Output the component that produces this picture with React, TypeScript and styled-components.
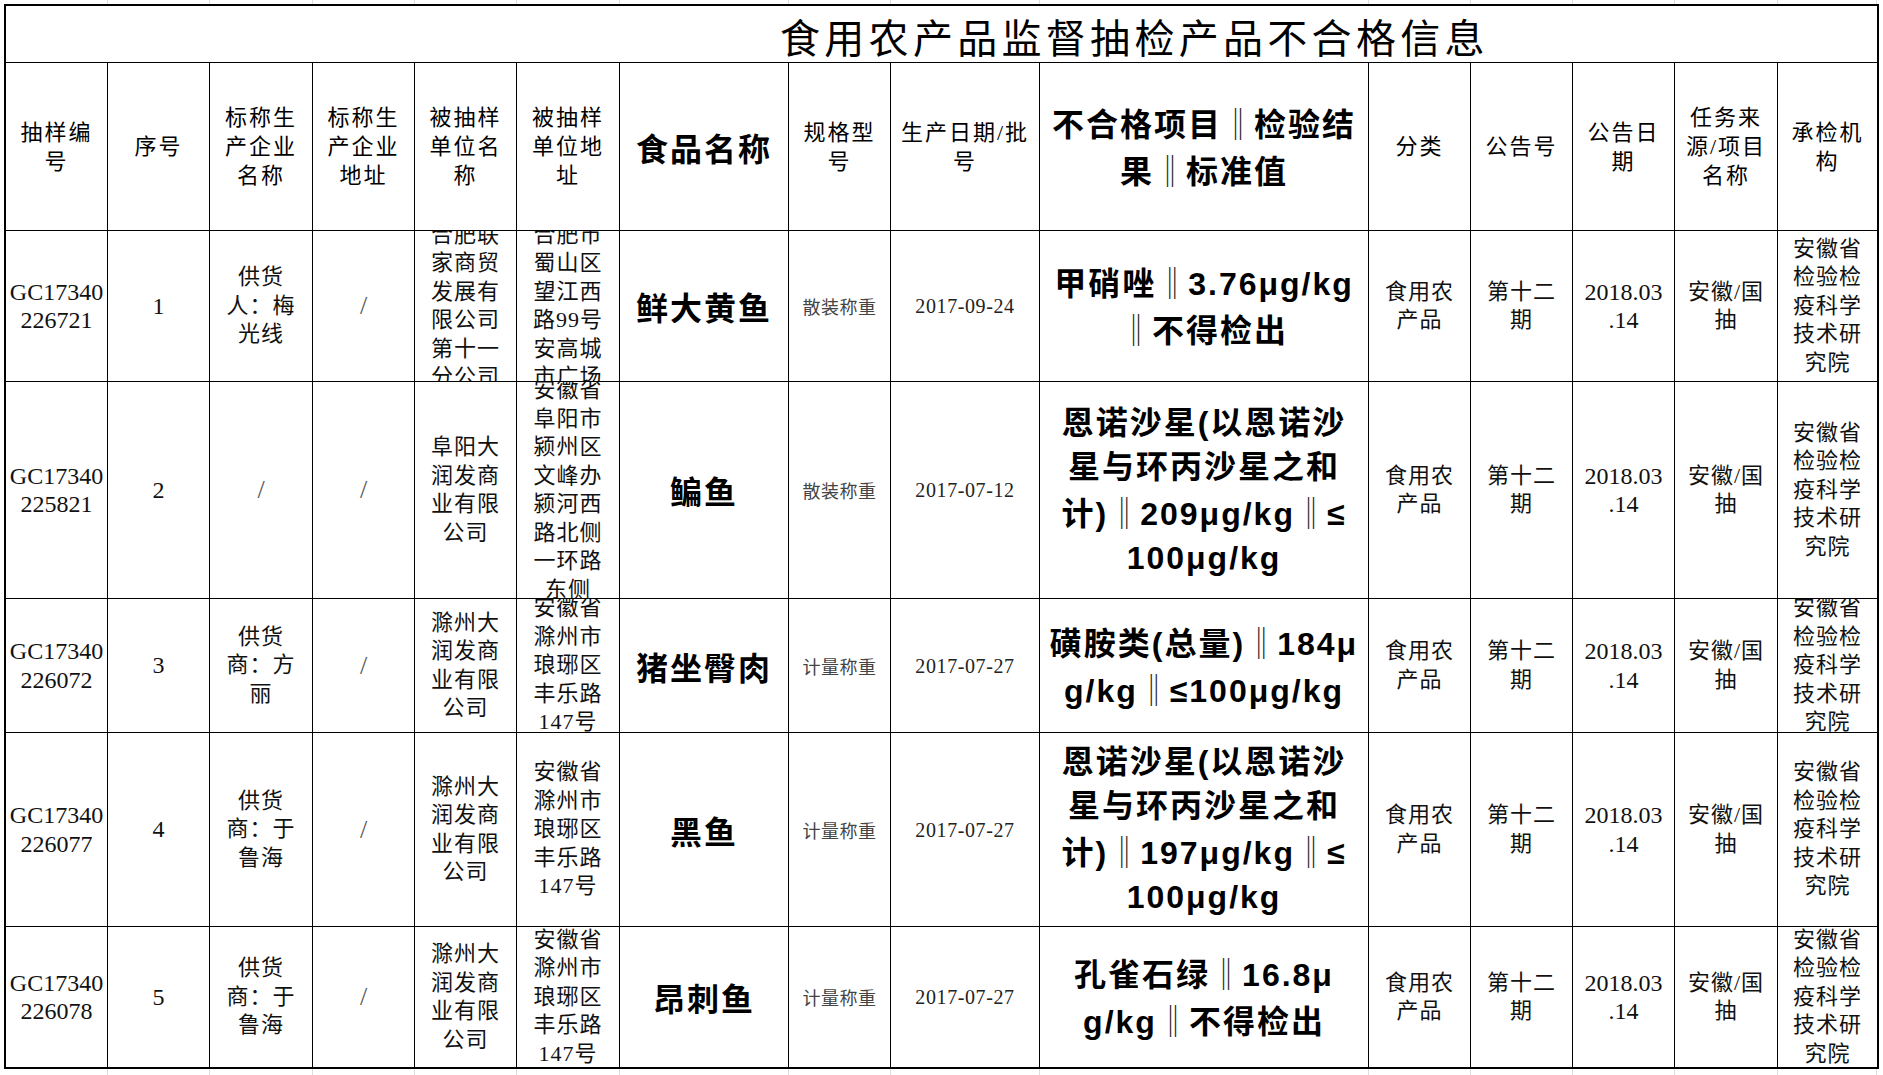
import React from "react";
import styled, { createGlobalStyle, css } from "styled-components";

const GlobalStyle = createGlobalStyle`
  html, body {
    margin: 0;
    padding: 0;
    background: #fff;
  }
  body {
    font-family: "Noto Sans CJK SC", "Noto Sans", sans-serif;
    color: #000;
  }
`;

// column widths (px) including each cell's 1px right line
const COLS = [102, 102, 103, 102, 102, 103, 169, 102, 149, 329, 102, 102, 102, 103, 99];
const gridCols = COLS.map((w) => `${w}px`).join(" ");
const ROW_HEIGHTS = [151, 217, 134, 194, 140];

type Kind = "head" | "text" | "num" | "spec" | "date" | "big" | "item" | "slash";

interface CellData {
  kind: Kind;
  lines: string[];
}

const Page = styled.div`
  width: 1883px;
  height: 1075px;
  overflow: hidden;
  display: flex;
  flex-direction: column;
`;

const GhostStrip = styled.div<{ $h: number }>`
  display: grid;
  grid-template-columns: ${gridCols};
  height: ${({ $h }) => $h}px;
  margin-left: 6px;
  flex-shrink: 0;
`;

const GhostCell = styled.div`
  border-right: 1px solid #dedede;
`;

const Sheet = styled.div`
  margin-left: 4px;
  width: 1871px;
  border: 2px solid #000;
  display: grid;
  grid-template-columns: ${gridCols};
  flex-shrink: 0;
`;

const TitleCell = styled.div`
  grid-column: 1 / -1;
  height: 57px;
  box-sizing: border-box;
  border-bottom: 1px solid #000;
  display: flex;
  align-items: center;
  padding: 4px 0 0 774px;
  font-family: "Noto Sans CJK SC", sans-serif;
  font-size: 40px;
  font-weight: 400;
  letter-spacing: 4.3px;
  white-space: nowrap;
`;

const Cell = styled.div<{ $h: number; $lastCol: boolean; $lastRow: boolean }>`
  height: ${({ $h }) => $h}px;
  box-sizing: border-box;
  border-right: ${({ $lastCol }) => ($lastCol ? "none" : "1px solid #000")};
  border-bottom: ${({ $lastRow }) => ($lastRow ? "none" : "1px solid #000")};
  display: flex;
  flex-direction: column;
  justify-content: center;
  align-items: center;
  overflow: hidden;
  text-align: center;
`;

const kindStyles: Record<Kind, ReturnType<typeof css>> = {
  head: css`
    font-family: "Liberation Serif", "Noto Sans CJK SC", serif;
    font-size: 22px;
    letter-spacing: 2px;
    line-height: 29px;
  `,
  text: css`
    font-family: "Liberation Serif", "Noto Sans CJK SC", serif;
    font-size: 22px;
    letter-spacing: 1px;
    line-height: 28.5px;
    color: #111;
  `,
  num: css`
    font-family: "Liberation Serif", serif;
    font-size: 24px;
    line-height: 28.5px;
    color: #111;
  `,
  spec: css`
    font-family: "Noto Sans CJK SC", sans-serif;
    font-size: 18px;
    letter-spacing: 0.5px;
    line-height: 24px;
    color: #444;
  `,
  date: css`
    font-family: "Liberation Serif", serif;
    font-size: 20px;
    letter-spacing: 0.6px;
    line-height: 24px;
    color: #222;
  `,
  big: css`
    font-family: "Noto Sans CJK SC", sans-serif;
    font-weight: 700;
    font-size: 32px;
    letter-spacing: 2px;
    line-height: 40px;
  `,
  item: css`
    font-family: "Liberation Sans", "Noto Sans CJK SC", sans-serif;
    font-weight: 700;
    font-size: 32px;
    letter-spacing: 2px;
    line-height: 44px;
  `,
  slash: css`
    font-family: "Liberation Serif", serif;
    font-size: 26px;
    line-height: 30px;
    color: #555;
  `,
};

const Line = styled.div<{ $kind: Kind }>`
  white-space: nowrap;
  ${({ $kind }) => kindStyles[$kind]}
`;

// the separator is a full-width, light double bar in the sheet
const Bar = styled.span`
  display: inline-block;
  width: 32px;
  text-align: center;
  font-family: "Noto Sans CJK SC", sans-serif;
  font-weight: 400;
  color: #222;
`;

const header: CellData[] = [
  { kind: "head", lines: ["抽样编", "号"] },
  { kind: "head", lines: ["序号"] },
  { kind: "head", lines: ["标称生", "产企业", "名称"] },
  { kind: "head", lines: ["标称生", "产企业", "地址"] },
  { kind: "head", lines: ["被抽样", "单位名", "称"] },
  { kind: "head", lines: ["被抽样", "单位地", "址"] },
  { kind: "big", lines: ["食品名称"] },
  { kind: "head", lines: ["规格型", "号"] },
  { kind: "head", lines: ["生产日期/批", "号"] },
  { kind: "item", lines: ["不合格项目‖检验结", "果‖标准值"] },
  { kind: "head", lines: ["分类"] },
  { kind: "head", lines: ["公告号"] },
  { kind: "head", lines: ["公告日", "期"] },
  { kind: "head", lines: ["任务来", "源/项目", "名称"] },
  { kind: "head", lines: ["承检机", "构"] },
];

const tail: CellData[] = [
  { kind: "text", lines: ["食用农", "产品"] },
  { kind: "text", lines: ["第十二", "期"] },
  { kind: "num", lines: ["2018.03", ".14"] },
  { kind: "text", lines: ["安徽/国", "抽"] },
  { kind: "text", lines: ["安徽省", "检验检", "疫科学", "技术研", "究院"] },
];

const slash: CellData = { kind: "slash", lines: ["/"] };

function row(
  code: string[],
  no: string,
  maker: string[] | null,
  unit: string[],
  address: string[],
  food: string,
  spec: string,
  date: string,
  item: string[]
): CellData[] {
  return [
    { kind: "num", lines: code },
    { kind: "num", lines: [no] },
    maker ? { kind: "text", lines: maker } : slash,
    slash,
    { kind: "text", lines: unit },
    { kind: "text", lines: address },
    { kind: "big", lines: [food] },
    { kind: "spec", lines: [spec] },
    { kind: "date", lines: [date] },
    { kind: "item", lines: item },
    ...tail,
  ];
}

const zhuzhouUnit = ["滁州大", "润发商", "业有限", "公司"];
const zhuzhouAddr = ["安徽省", "滁州市", "琅琊区", "丰乐路", "147号"];

const rows: CellData[][] = [
  row(
    ["GC17340", "226721"],
    "1",
    ["供货", "人：梅", "光线"],
    ["合肥联", "家商贸", "发展有", "限公司", "第十一", "分公司"],
    ["合肥市", "蜀山区", "望江西", "路99号", "安高城", "市广场"],
    "鲜大黄鱼",
    "散装称重",
    "2017-09-24",
    ["甲硝唑‖3.76μg/kg", "‖不得检出"]
  ),
  row(
    ["GC17340", "225821"],
    "2",
    null,
    ["阜阳大", "润发商", "业有限", "公司"],
    ["安徽省", "阜阳市", "颍州区", "文峰办", "颍河西", "路北侧", "一环路", "东侧"],
    "鳊鱼",
    "散装称重",
    "2017-07-12",
    ["恩诺沙星(以恩诺沙", "星与环丙沙星之和", "计)‖209μg/kg‖≤", "100μg/kg"]
  ),
  row(
    ["GC17340", "226072"],
    "3",
    ["供货", "商：方", "丽"],
    zhuzhouUnit,
    zhuzhouAddr,
    "猪坐臀肉",
    "计量称重",
    "2017-07-27",
    ["磺胺类(总量)‖184μ", "g/kg‖≤100μg/kg"]
  ),
  row(
    ["GC17340", "226077"],
    "4",
    ["供货", "商：于", "鲁海"],
    zhuzhouUnit,
    zhuzhouAddr,
    "黑鱼",
    "计量称重",
    "2017-07-27",
    ["恩诺沙星(以恩诺沙", "星与环丙沙星之和", "计)‖197μg/kg‖≤", "100μg/kg"]
  ),
  row(
    ["GC17340", "226078"],
    "5",
    ["供货", "商：于", "鲁海"],
    zhuzhouUnit,
    zhuzhouAddr,
    "昂刺鱼",
    "计量称重",
    "2017-07-27",
    ["孔雀石绿‖16.8μ", "g/kg‖不得检出"]
  ),
];

function withBars(text: string) {
  const parts = text.split("‖");
  return parts.flatMap((part, i) =>
    i === 0 ? [part] : [<Bar key={i}>‖</Bar>, part]
  );
}

function renderRow(cells: CellData[], height: number, lastRow: boolean, key: string) {
  return cells.map((cell, i) => (
    <Cell key={`${key}-${i}`} $h={height} $lastCol={i === COLS.length - 1} $lastRow={lastRow}>
      {cell.lines.map((line, j) => (
        <Line key={j} $kind={cell.kind}>
          {cell.kind === "item" ? withBars(line) : line}
        </Line>
      ))}
    </Cell>
  ));
}

function Ghost({ h }: { h: number }) {
  return (
    <GhostStrip $h={h}>
      {COLS.map((_, i) => (
        <GhostCell key={i} />
      ))}
    </GhostStrip>
  );
}

export default function App() {
  return (
    <>
      <GlobalStyle />
      <Page>
        <Ghost h={4} />
        <Sheet>
          <TitleCell>食用农产品监督抽检产品不合格信息</TitleCell>
          {renderRow(header, 168, false, "h")}
          {rows.map((r, i) =>
            renderRow(r, ROW_HEIGHTS[i], i === rows.length - 1, `r${i}`)
          )}
        </Sheet>
        <Ghost h={6} />
      </Page>
    </>
  );
}
